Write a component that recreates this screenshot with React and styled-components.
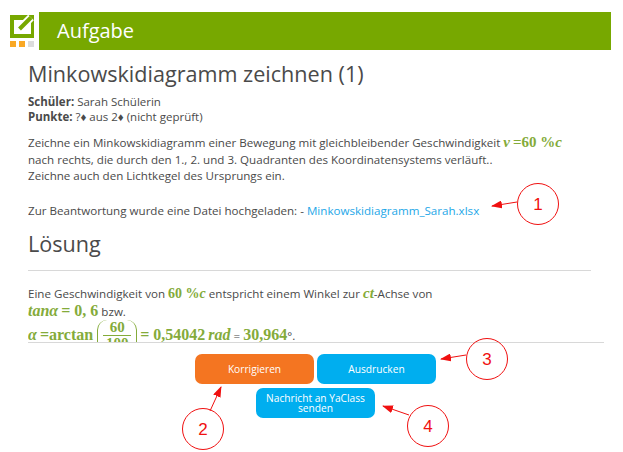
import React from 'react';
import styled, { createGlobalStyle } from 'styled-components';

const Global = createGlobalStyle`
  html, body { margin: 0; padding: 0; background: #fff; }
  body { font-family: "Open Sans", "Liberation Sans", sans-serif; color: #4a4a4a; }
`;

const Page = styled.div`
  position: relative;
  width: 623px;
  height: 452px;
  overflow: hidden;
`;

const Header = styled.header`
  display: flex;
  padding: 12px 12px 0 10px;
  gap: 5px;
`;

const Logo = styled.svg`
  width: 24px;
  height: 38px;
  flex: none;
`;

const Banner = styled.div`
  flex: 1;
  height: 38px;
  background: #77a800;
  color: #fff;
  font-size: 20px;
  line-height: 38px;
  padding-left: 18px;
`;

const Scroll = styled.div`
  height: 292px;
  margin: 0 19px 0 28px;
  border-bottom: 1px solid #d8d8d8;
  overflow: hidden;
`;

const Title = styled.h1`
  margin: 9px 0 0;
  font-size: 21.6px;
  font-weight: 400;
  line-height: 29px;
  color: #4a4a4a;
`;

const Meta = styled.div`
  margin-top: 6px;
  font-size: 11.5px;
  line-height: 15px;
`;

const Text = styled.p`
  margin: ${p => p.$top || 0}px 0 0;
  font-size: 11.6px;
  line-height: 16.5px;
`;

const Math = styled.span`
  font-family: "Liberation Serif", "DejaVu Serif", serif;
  font-weight: 700;
  font-size: ${p => p.$size || 15}px;
  line-height: 1;
  color: #84ab3a;
  font-style: ${p => (p.$italic ? 'italic' : 'normal')};
`;

const FileLink = styled.a`
  color: #1ea7e8;
  text-decoration: none;
`;

const Heading = styled.h2`
  width: 563px;
  margin: 10px 0 0;
  padding-bottom: 12px;
  font-size: 21.6px;
  font-weight: 400;
  line-height: 29px;
  border-bottom: 1px solid #d8d8d8;
`;

const Formula = styled.div`
  display: flex;
  align-items: flex-start;
  font-size: 11.6px;
`;

const Run = styled.span`
  margin-top: 7px;
  line-height: 15px;
  white-space: pre;
`;

const Fraction = styled.span`
  display: inline-flex;
  flex: none;
  flex-direction: column;
  align-items: center;
  width: 40px;
  height: 40px;
  box-sizing: border-box;
  margin: 0 3px 0 4px;
  border-left: 1.5px solid #84ab3a;
  border-right: 1.5px solid #84ab3a;
  border-radius: 10px;
  line-height: 21px;
`;

const Denominator = styled.span`
  border-top: 1px solid #84ab3a;
  padding: 0 3px;
  line-height: 16px;
`;

const Actions = styled.div`
  display: flex;
  flex-wrap: wrap;
  justify-content: center;
  gap: 4px 3px;
  width: 241px;
  margin: 11px 0 0 195px;
`;

const Button = styled.button`
  width: 119px;
  height: 30px;
  padding: 0 6px;
  border: 0;
  border-radius: 7px;
  background: ${p => (p.$orange ? '#f47521' : '#00aeef')};
  color: #fff;
  font-family: inherit;
  font-size: 10.2px;
  line-height: 10.5px;
`;

const Overlay = styled.svg`
  position: absolute;
  inset: 0;
  width: 623px;
  height: 452px;
  pointer-events: none;
`;

const Mark = styled.text`
  font-family: "Liberation Sans", sans-serif;
  font-size: 17px;
  fill: #f01010;
  text-anchor: middle;
`;

const callouts = [
  { n: 1, cx: 538, cy: 204, from: [517, 202], to: [492, 206] },
  { n: 2, cx: 203, cy: 429, from: [210, 411], to: [221, 387] },
  { n: 3, cx: 487, cy: 359, from: [466, 355], to: [441, 359] },
  { n: 4, cx: 428, cy: 426, from: [409, 415], to: [383, 406] },
];

export default function App() {
  return (
    <Page>
      <Global />
      <Header>
        <Logo viewBox="0 0 24 38">
          <rect x="0" y="3" width="24" height="23" fill="#77a800" />
          <rect x="4" y="8" width="17" height="14" fill="#fff" />
          <path d="M9.5 17L21 5.5" stroke="#fff" strokeWidth="8" />
          <path d="M9.5 17L21 5.5" stroke="#77a800" strokeWidth="4" />
          <rect x="0" y="29" width="6" height="6" fill="#f9a825" />
          <rect x="9" y="29" width="6" height="6" fill="#f9a825" />
          <rect x="18" y="29" width="6" height="6" fill="#dcdcdc" />
        </Logo>
        <Banner>Aufgabe</Banner>
      </Header>
      <Scroll>
        <Title>Minkowskidiagramm zeichnen (1)</Title>
        <Meta>
          <div><b>Schüler:</b> Sarah Schülerin</div>
          <div><b>Punkte:</b> ?♦ aus 2♦ (nicht geprüft)</div>
        </Meta>
        <Text $top={11}>
          Zeichne ein Minkowskidiagramm einer Bewegung mit gleichbleibender Geschwindigkeit{' '}
          <Math $italic>v</Math> <Math>=60 %</Math><Math $italic>c</Math>
          <br />
          nach rechts, die durch den 1., 2. und 3. Quadranten des Koordinatensystems verläuft..
          <br />
          Zeichne auch den Lichtkegel des Ursprungs ein.
        </Text>
        <Text $top={18}>
          Zur Beantwortung wurde eine Datei hochgeladen: -{' '}
          <FileLink href="#">Minkowskidiagramm_Sarah.xlsx</FileLink>
        </Text>
        <Heading>Lösung</Heading>
        <Text $top={15}>
          Eine Geschwindigkeit von <Math $size={14}>60 %</Math><Math $size={14} $italic>c</Math> entspricht einem Winkel zur{' '}
          <Math $italic>ct</Math>-Achse von
          <br />
          <Math $size={16} $italic>tanα</Math> <Math $size={16}>= 0, 6</Math> bzw.
        </Text>
        <Formula>
          <Run><Math $size={16} $italic>α</Math> <Math $size={16}>=arctan</Math></Run>
          <Fraction>
            <Math>60</Math>
            <Denominator><Math>100</Math></Denominator>
          </Fraction>
          <Run><Math $size={16}>= 0,54042</Math> <Math $size={16} $italic>rad</Math> = <Math $size={16}>30,964</Math>°.</Run>
        </Formula>
      </Scroll>
      <Actions>
        <Button $orange>Korrigieren</Button>
        <Button>Ausdrucken</Button>
        <Button>Nachricht an YaClass senden</Button>
      </Actions>
      <Overlay viewBox="0 0 623 452">
        <defs>
          <marker id="head" markerUnits="userSpaceOnUse" markerWidth="11" markerHeight="8" refX="10" refY="4" orient="auto">
            <path d="M0 0L11 4L0 8z" fill="#f01010" />
          </marker>
        </defs>
        {callouts.map(c => (
          <g key={c.n}>
            <circle cx={c.cx} cy={c.cy} r="20.5" fill="none" stroke="#f01010" />
            <line x1={c.from[0]} y1={c.from[1]} x2={c.to[0]} y2={c.to[1]} stroke="#f01010" markerEnd="url(#head)" />
            <Mark x={c.cx} y={c.cy + 6}>{c.n}</Mark>
          </g>
        ))}
      </Overlay>
    </Page>
  );
}
